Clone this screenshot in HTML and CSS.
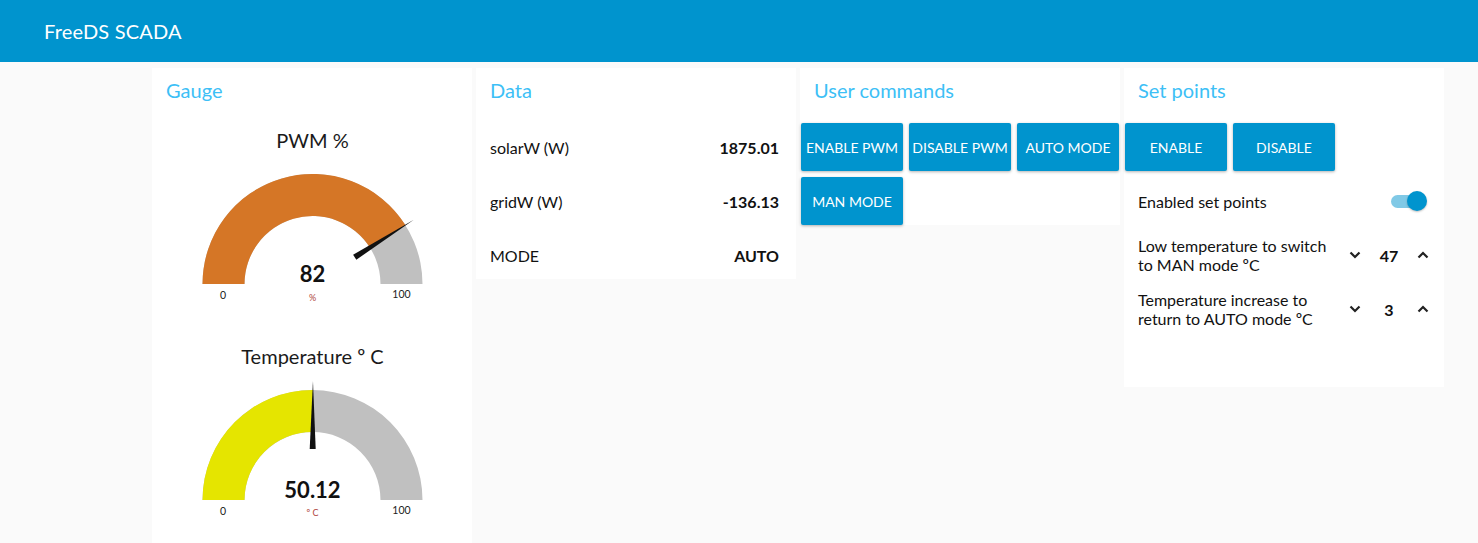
FILE: index.html
```html
<!DOCTYPE html>
<html lang="en">
<head>
<meta charset="utf-8">
<title>FreeDS SCADA</title>
<link rel="stylesheet" href="styles.css">
</head>
<body>
<header class="topbar"><span class="brand">FreeDS SCADA</span></header>
<main class="board">
  <section class="card">
    <h2 class="card-title">Gauge</h2>
    <div class="widgets">
      <div class="gauge">
        <svg class="gauge-svg" viewBox="0 0 318 210" width="318" height="210">
          <text class="g-title" x="159.5" y="25">PWM %</text>
          <path class="g-bg" d="M49.5 161 A110 110 0 0 1 269.5 161 L227.5 161 A68 68 0 0 0 91.5 161 Z"/>
          <path class="g-orange" d="M49.5 161 A110 110 0 0 1 252.37 102.06 L216.91 124.57 A68 68 0 0 0 91.5 161 Z"/>
          <polygon class="g-needle" points="203.33,136.74 200.11,131.68 260.82,96.7"/>
          <text class="g-value" x="159.5" y="159">82</text>
          <text class="g-unit" x="159.5" y="178">%</text>
          <text class="g-min" x="70" y="176">0</text>
          <text class="g-max" x="248.5" y="175">100</text>
        </svg>
      </div>
      <div class="gauge">
        <svg class="gauge-svg" viewBox="0 0 318 210" width="318" height="210">
          <text class="g-title" x="159.5" y="25">Temperature º C</text>
          <path class="g-bg" d="M49.5 161 A110 110 0 0 1 269.5 161 L227.5 161 A68 68 0 0 0 91.5 161 Z"/>
          <path class="g-yellow" d="M49.5 161 A110 110 0 0 1 159.92 51 L159.76 93 A68 68 0 0 0 91.5 161 Z"/>
          <polygon class="g-needle" points="162.7,110 156.7,110 159.96,42"/>
          <text class="g-value" x="159.5" y="159">50.12</text>
          <text class="g-unit" x="159.5" y="177">º C</text>
          <text class="g-min" x="70" y="176">0</text>
          <text class="g-max" x="248.5" y="175">100</text>
        </svg>
      </div>
    </div>
  </section>

  <section class="card">
    <h2 class="card-title">Data</h2>
    <div class="widgets">
      <div class="row"><span class="label">solarW (W)</span><span class="value">1875.01</span></div>
      <div class="row"><span class="label">gridW (W)</span><span class="value">-136.13</span></div>
      <div class="row"><span class="label">MODE</span><span class="value">AUTO</span></div>
    </div>
  </section>

  <section class="card">
    <h2 class="card-title">User commands</h2>
    <div class="widgets">
      <button class="btn">Enable PWM</button>
      <button class="btn">Disable PWM</button>
      <button class="btn">Auto mode</button>
      <button class="btn">Man mode</button>
    </div>
  </section>

  <section class="card">
    <h2 class="card-title">Set points</h2>
    <div class="widgets">
      <button class="btn">Enable</button>
      <button class="btn">Disable</button>
      <div class="row"><span class="label">Enabled set points</span>
        <span class="toggle"><span class="toggle-track"></span><span class="toggle-thumb"></span></span>
      </div>
      <div class="num-row">
        <span class="num-label">Low temperature to switch to MAN mode ºC</span>
        <span class="num-ctrl"><svg class="chev" viewBox="0 0 12 8" width="12" height="8"><polyline points="1.5,1.5 6,6 10.5,1.5"/></svg></span>
        <span class="num-ctrl num-val">47</span>
        <span class="num-ctrl"><svg class="chev" viewBox="0 0 12 8" width="12" height="8"><polyline points="1.5,6.5 6,2 10.5,6.5"/></svg></span>
      </div>
      <div class="num-row">
        <span class="num-label">Temperature increase to return to AUTO mode ºC</span>
        <span class="num-ctrl"><svg class="chev" viewBox="0 0 12 8" width="12" height="8"><polyline points="1.5,1.5 6,6 10.5,1.5"/></svg></span>
        <span class="num-ctrl num-val">3</span>
        <span class="num-ctrl"><svg class="chev" viewBox="0 0 12 8" width="12" height="8"><polyline points="1.5,6.5 6,2 10.5,6.5"/></svg></span>
      </div>
      <div class="spacer"></div>
    </div>
  </section>
</main>
</body>
</html>
```
FILE: styles.css
```css
* { box-sizing: border-box; }
html, body { margin: 0; padding: 0; }
body {
  background: #fafafa;
  font-family: Lato, "Liberation Sans", sans-serif;
  color: #111;
  height: 543px;
  overflow: hidden;
}
.topbar {
  height: 62px;
  background: #0094ce;
  display: flex;
  align-items: center;
  padding-left: 44px;
}
.brand {
  color: #fff;
  font-size: 20px;
  letter-spacing: 0.2px;
}
.board {
  display: flex;
  align-items: flex-start;
  gap: 4px;
  padding: 6px 0 0 152px;
}
.card {
  width: 320px;
  background: #fff;
  flex: none;
}
.card-title {
  margin: 0;
  height: 55px;
  line-height: 45px;
  padding: 0 14px;
  font-size: 20px;
  font-weight: normal;
  color: #3dbff6;
}
.widgets {
  display: flex;
  flex-wrap: wrap;
  gap: 6px;
  padding: 0 1px;
}
.gauge { width: 318px; height: 210px; }
.gauge-svg { display: block; }
.g-title { font-family: Lato, sans-serif; font-size: 20px; fill: #1a1a1a; text-anchor: middle; }
.g-bg { fill: #c0c0c0; }
.g-orange { fill: #d57626; }
.g-yellow { fill: #e5e500; }
.g-needle { fill: #111; }
.g-value { font-family: Lato, sans-serif; font-weight: bold; font-size: 22px; fill: #111; text-anchor: middle; }
.g-unit { font-family: Lato, sans-serif; font-size: 9px; fill: #b0473d; text-anchor: middle; }
.g-min, .g-max { font-family: Lato, sans-serif; font-size: 10.5px; fill: #222; text-anchor: middle; }
.row {
  width: 100%;
  height: 48px;
  display: flex;
  align-items: center;
  justify-content: space-between;
  padding: 0 16px 0 13px;
  font-size: 16px;
}
.value { font-weight: bold; }
.btn {
  width: 102px;
  height: 48px;
  border: none;
  border-radius: 2px;
  background: #0094ce;
  color: #fff;
  font-family: Lato, sans-serif;
  font-size: 14px;
  text-transform: uppercase;
  padding: 0;
  box-shadow: 0 1px 3px rgba(0, 0, 0, 0.3);
}
.toggle {
  position: relative;
  width: 36px;
  height: 20px;
}
.toggle-track {
  position: absolute;
  left: 0;
  top: 4px;
  width: 29px;
  height: 13px;
  border-radius: 7px;
  background: #80c9e6;
}
.toggle-thumb {
  position: absolute;
  right: 0;
  top: 0;
  width: 20px;
  height: 20px;
  border-radius: 50%;
  background: #0094ce;
  box-shadow: 0 1px 2px rgba(0, 0, 0, 0.25);
}
.num-row {
  width: 100%;
  height: 48px;
  display: flex;
  align-items: center;
  padding: 0 3px 0 13px;
  font-size: 16px;
}
.num-label {
  width: 200px;
  line-height: 19px;
}
.num-ctrl {
  width: 34px;
  display: flex;
  justify-content: center;
  align-items: center;
}
.num-val { font-weight: bold; }
.chev polyline {
  fill: none;
  stroke: #222;
  stroke-width: 2.2;
}
.spacer { width: 100%; height: 48px; }
```
